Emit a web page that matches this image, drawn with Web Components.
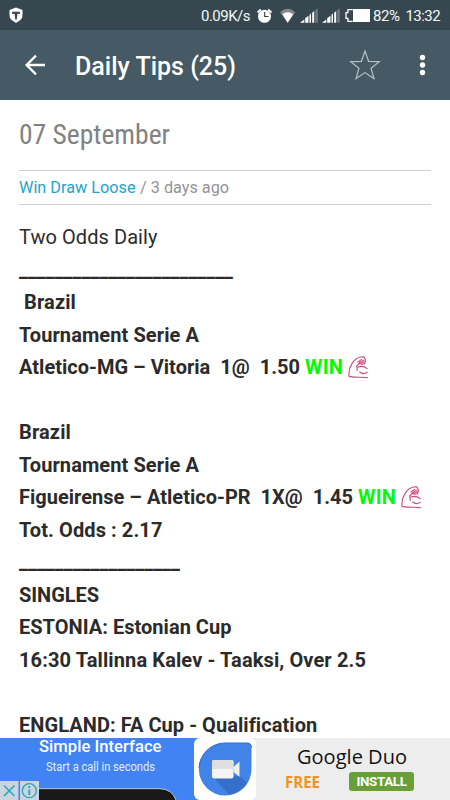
<!DOCTYPE html>
<html lang="en"><head><meta charset="utf-8"><title>Daily Tips</title>
<style>html,body{margin:0;width:450px;height:800px;overflow:hidden;background:#fff;font-family:Roboto,"Liberation Sans",sans-serif}</style>
</head><body><tips-screen></tips-screen>
<script>
const define=(name,html)=>customElements.define(name,class extends HTMLElement{
  constructor(){super();this.attachShadow({mode:'open'}).innerHTML=html;}
});

/* A single run of text set to an exact measure, by tracking or by horizontal scale. */
customElements.define('fit-text',class extends HTMLElement{
  constructor(){super();this.attachShadow({mode:'open'}).innerHTML=
    '<style>:host{display:inline-block;white-space:pre;flex:none}span{display:inline-block;transform-origin:0 50%}</style><span><slot></slot></span>';}
  connectedCallback(){
    const s=this.shadowRoot.querySelector('span'),w=+this.getAttribute('w');
    if(!w)return;
    const n=s.getBoundingClientRect().width,len=this.textContent.length;
    if(this.hasAttribute('scale')){s.style.transform='scaleX('+w/n+')';}
    else s.style.letterSpacing=(w-n)/len+'px';
    this.style.width=w+'px';
  }
});

define('flex-arm',`<style>:host{display:block;white-space:normal;width:22px;height:24px;flex:none}svg{display:block}</style>
<svg width="22" height="24" viewBox="0 0 22 24" fill="none" stroke="#d04a7c" stroke-width="1.15" stroke-linejoin="round" stroke-linecap="round">
<path d="M19.3 22.6C14 21.8 8 22.9 1.1 21.4 .5 16.6 1.7 12 4.1 8.4 5.9 5.2 9 2.8 12.5 2L15.8 1.9 17.4 4.8 16.8 8.6 13.4 9.2 11.9 8.2 8.7 10.8 9.3 15.5"/>
<path d="M9.6 12.2C13 10.8 16.5 11.6 19.2 13.6M11.7 17C14.2 19.2 17 18.9 19.2 17.3M9.9 7L13.6 4.4M11 8L15.4 5.2M13.1 8.4L16.4 6.6"/></svg>`);

define('status-bar',`<style>:host{display:flex;height:30px;background:#37474f;color:#f3f7f8;font-size:15px;align-items:center;padding-left:9px;box-sizing:border-box}svg{display:block;flex:none}.t{line-height:20px;padding-top:2px}</style>
<svg width="14" height="16" viewBox="0 0 14 16"><path fill="#fff" d="M7 .5L13.5 3V8C13.5 12 10 14.5 7 15.7 4 14.5.5 12 .5 8V3Z"/><path fill="#37474f" d="M3 4.7H11V6.8H8.4L7.8 12.4H6.2L5.7 6.8H3Z"/></svg>
<fit-text class="t" w="49" style="margin-left:178px">0.09K/s</fit-text>
<svg width="120" height="30" viewBox="250 0 120 30">
<g><circle cx="264.5" cy="16.3" r="6.5" fill="#fff"/><path d="M257.5 12.5L260.8 9.5M271.5 12.5L268.2 9.5" stroke="#fff" stroke-width="1.8"/><path d="M264.7 12V16.5H268.5" fill="none" stroke="#37474f" stroke-width="1.2"/></g>
<path d="M280 12.2Q287.7 5.5 295.3 12.2L287.7 22.8Z" fill="#84898c"/><path d="M282.3 14.2Q287.7 10.2 293.2 14.2L287.7 22.8Z" fill="#fff"/>
<g><path fill="#fff" d="M300 22.7L304.3 19.5V22.7ZM305.2 18.2L308.5 15.8V22.7H305.2ZM309.5 14.8L311 13.5V22.7H309.5ZM312.2 12.8L314.2 11V22.7H312.2Z"/><path fill="#6d797e" d="M315.2 10.2L317.8 8.2V22.7H315.2Z"/></g>
<g transform="translate(22 0)"><path fill="#fff" d="M300 22.7L304.3 19.5V22.7ZM305.2 18.2L308.5 15.8V22.7H305.2ZM309.5 14.8L311 13.5V22.7H309.5ZM312.2 12.8L314.2 11V22.7H312.2Z"/><path fill="#6d797e" d="M315.2 10.2L317.8 8.2V22.7H315.2Z"/></g>
<path d="M352.7 9.7H347.9V12.7H346V18.4H347.9V21.3H352.7" fill="none" stroke="#fff" stroke-width="1.3"/><path fill="#fff" d="M353 9H370V22H353Z"/></svg>
<fit-text class="t" w="26.5" style="margin-left:3px">82%</fit-text><fit-text class="t" w="34.5" style="margin-left:6px">13:32</fit-text>`);

define('app-bar',`<style>:host{display:flex;height:70px;background:#455a64;color:#fff;align-items:center;padding:0 19px 0 24px}svg{display:block;flex:none}.t{font-size:25px;font-weight:500;line-height:30px;margin-left:29px;margin-top:3px}.star{margin-left:auto}</style>
<svg width="22" height="22" viewBox="0 0 22 22" fill="none" stroke="#fff" stroke-width="2.3"><path d="M21 11H3M12 1.6L2.6 11 12 20.4"/></svg>
<fit-text class="t" w="161">Daily Tips (25)</fit-text>
<svg class="star" width="34" height="34" viewBox="0 0 34 34" fill="none" stroke="#b7c0c5" stroke-width="1.2"><path d="M17 3L20.6 13.3 31.3 13.6 23.1 20.2 26 30.6 17 24.6 8 30.6 10.9 20.2 2.7 13.6 13.4 13.3Z"/></svg>
<svg width="17" height="24" viewBox="0 0 17 24" style="margin-left:32px" fill="#fff"><circle cx="8.5" cy="4.5" r="2.7"/><circle cx="8.5" cy="12" r="2.7"/><circle cx="8.5" cy="19.5" r="2.7"/></svg>`);

define('post-meta',`<style>:host{display:flex;height:33px;margin-top:18px;border-top:1px solid #cfcfcf;border-bottom:1px solid #cfcfcf;align-items:center;font-size:16px;color:#949494}fit-text{margin-top:-1px}.a{color:#1ba5cc}</style>
<fit-text class="a" w="116.5" scale>Win Draw Loose</fit-text><fit-text w="93" scale> / 3 days ago</fit-text>`);

define('tip-row',`<style>:host{display:flex;height:32.5px;align-items:center;font-size:20px;font-weight:700;color:#2b2b2b;white-space:pre}</style><slot></slot>`);

define('ad-banner',`<style>
:host{display:flex;position:absolute;left:0;top:738px;width:450px;height:62px;background:#ededed;overflow:hidden}
.l{width:193px;background:#4283f4;color:#fff;display:flex;flex-direction:column;align-items:flex-start;position:relative}
.h{font-size:16.6px;font-weight:500;line-height:20px;margin:-1px 0 0 39px}.s{font-size:12px;line-height:14px;margin:3px 0 0 46px;color:#e2edff}
.l svg{position:absolute;left:0;bottom:0}
.i{width:64px;background:linear-gradient(90deg,#4283f4 6px,#ededed 6px)}svg{display:block}
.r{flex:1;display:flex;flex-direction:column}.g{font:20px/26px "Open Sans","Noto Sans",sans-serif;color:#111;margin:6px 0 0 40px}
.b{display:flex;align-items:center;margin:1px 0 0 28px}.f{font:700 16px/20px "Open Sans","Noto Sans",sans-serif;color:#f0931e;margin-top:1px}
.n{display:flex;justify-content:center;align-items:center;width:65px;height:19px;background:#689f38;border-radius:3px;margin-left:29px;margin-top:-1px;color:#fff;font-size:13.3px;font-weight:700;}
</style>
<div class="l"><fit-text class="h" w="122.5">Simple Interface</fit-text><fit-text class="s" w="109" scale>Start a call in seconds</fit-text>
<svg width="193" height="12" viewBox="0 0 193 12"><path d="M36 12V1H160Q172 1 176 12Z" fill="#181818"/><path d="M36 .7H160Q172 1 176 12" stroke="#b8c1ce" fill="none"/></svg>
<svg width="39" height="19" viewBox="0 0 39 19"><path fill="#ccd4df" d="M0 0H18.5V19H0ZM20 0H39V19H20Z"/><path d="M4 4.5L14.5 15M14.5 4.5L4 15" stroke="#24a9b8" stroke-width="1.6"/><circle cx="29.3" cy="9.7" r="7" fill="none" stroke="#24a9b8" stroke-width="1.3"/><path d="M29.3 8.4V14M29.3 5V6.9" stroke="#24a9b8" stroke-width="1.8"/></svg></div>
<div class="i"><svg width="64" height="62" viewBox="0 0 64 62"><rect x="1" y="0" width="62" height="62" rx="6" fill="#fff"/><path d="M32 5H54Q58.5 5 58.5 9.5V31A26.3 26.3 0 1 1 32 5Z" fill="#4283e8"/><path d="M20.5 39.5L36 56.8Q47 54.5 54 45L46 37 38 40Z" fill="#356fc9"/><path d="M6 30A26 26 0 0 1 32 5H54Q58.5 5 58.5 9.5" fill="none" stroke="#2f6fd2"/><rect x="19" y="22" width="21.5" height="18.5" rx="2" fill="#f4f4f4"/><path d="M19 31V24Q19 22 21 22H38.5Q40.5 22 40.5 24V31Z" fill="#dedede"/><path d="M40.5 29L46.5 23.5V39L40.5 34Z" fill="#eee"/></svg></div>
<div class="r"><fit-text class="g" w="110">Google Duo</fit-text><div class="b"><fit-text class="f" w="35" scale>FREE</fit-text><div class="n"><fit-text w="50">INSTALL</fit-text></div></div></div>`);

define('tips-screen',`<style>:host{display:block;position:relative;width:450px;height:800px;overflow:hidden;background:#fff}
main{padding:17px 19px 0 19px}.d{display:block;font-family:"Roboto Condensed",Roboto,sans-serif;font-size:28px;font-weight:400;line-height:35px;height:35px;color:#828282}
.rows{margin-top:15.9px}.win{color:#05fa05}.reg{font-weight:400}flex-arm{margin-left:5px}</style>
<status-bar></status-bar><app-bar></app-bar>
<main><fit-text class="d" w="151" scale>07 September</fit-text><post-meta></post-meta>
<div class="rows">
<tip-row><fit-text class="reg" w="138.5">Two Odds Daily</fit-text></tip-row>
<tip-row><fit-text w="214">________________________</fit-text></tip-row>
<tip-row><fit-text w="57"> Brazil</fit-text></tip-row>
<tip-row><fit-text w="180">Tournament Serie A</fit-text></tip-row>
<tip-row><fit-text w="286">Atletico-MG – Vitoria  1@  1.50 </fit-text><fit-text class="win" w="38">WIN</fit-text><flex-arm></flex-arm></tip-row>
<tip-row></tip-row>
<tip-row><fit-text w="52">Brazil</fit-text></tip-row>
<tip-row><fit-text w="180">Tournament Serie A</fit-text></tip-row>
<tip-row><fit-text w="339">Figueirense – Atletico-PR  1X@  1.45 </fit-text><fit-text class="win" w="38">WIN</fit-text><flex-arm></flex-arm></tip-row>
<tip-row><fit-text w="143.5">Tot. Odds : 2.17</fit-text></tip-row>
<tip-row><fit-text w="161">__________________</fit-text></tip-row>
<tip-row><fit-text w="80">SINGLES</fit-text></tip-row>
<tip-row><fit-text w="212.5">ESTONIA: Estonian Cup</fit-text></tip-row>
<tip-row><fit-text w="347">16:30 Tallinna Kalev - Taaksi, Over 2.5</fit-text></tip-row>
<tip-row></tip-row>
<tip-row><fit-text w="298">ENGLAND: FA Cup - Qualification</fit-text></tip-row>
</div></main><ad-banner></ad-banner>`);
</script></body></html>
